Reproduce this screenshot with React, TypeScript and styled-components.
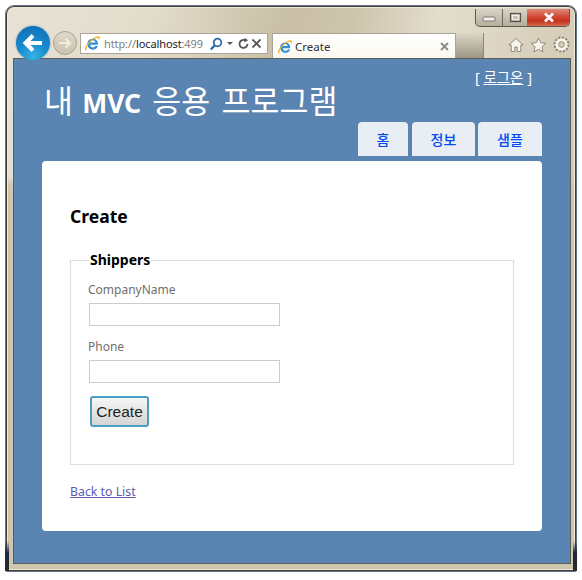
import React from "react";
import styled, { createGlobalStyle } from "styled-components";

const Global = createGlobalStyle`
  html, body { margin: 0; padding: 0; background: #fff; }
  * { box-sizing: border-box; }
  body { font-family: "Noto Sans", "Noto Sans CJK KR", sans-serif; }
`;

const Page = styled.div`
  width: 582px;
  height: 580px;
  padding: 5px 5px 8px 5px;
  overflow: hidden;
`;

const Frame = styled.div`
  position: relative;
  width: 572px;
  height: 567px;
  display: flex;
  flex-direction: column;
  padding: 0 6px 8px 8px;
  border: 1px solid #66768f;
  border-radius: 9px 9px 2px 2px;
  background:
    linear-gradient(180deg, rgba(255,255,255,0) 0 170px, #cfc6ae 180px 100%),
    linear-gradient(100deg, #e6e2d6 0%, #e2dccb 22%, #c9bfa6 42%, #cdc4ac 52%, #e3ddcd 65%, #d7cfba 82%, #cfc7b1 100%);
  box-shadow: inset 0 0 0 1px #3f3f38, inset 0 0 0 2px #efeadb;
`;

const EdgeShade = styled.div`
  position: absolute;
  left: -1px;
  bottom: 0;
  width: 4px;
  height: 30px;
  background: linear-gradient(180deg, rgba(20,30,60,0), #1c2640 40%, #2a2a2a);
`;

const RightShade = styled(EdgeShade)`
  left: auto;
  right: -1px;
`;

const TitleBar = styled.div`
  height: 27px;
  display: flex;
  justify-content: flex-end;
  align-items: flex-start;
`;

const Controls = styled.div`
  width: 95px;
  height: 18px;
  margin: 3px 0 0 0;
  display: grid;
  grid-template-columns: 26px 25px 44px;
  border: 1px solid #5c5a50;
  border-top: 0;
  border-radius: 0 0 5px 5px;
  overflow: hidden;
  background: linear-gradient(180deg, #d9d4c6, #b5ae9c);
`;

const Ctl = styled.div<{ $close?: boolean }>`
  display: flex;
  align-items: center;
  justify-content: center;
  border-left: ${(p) => (p.$close ? "0" : "1px solid #6b675b")};
  background: ${(p) => (p.$close ? "linear-gradient(180deg, #e0887a 0%, #d34a36 45%, #c4321f 70%, #d76a52 100%)" : "transparent")};
  &:first-child { border-left: 0; }
`;

const Toolbar = styled.div`
  height: 26px;
  display: flex;
  align-items: flex-start;
`;

const Back = styled.div`
  width: 34px;
  height: 34px;
  margin: -7px 0 0 2px;
  flex: none;
  position: relative;
  z-index: 2;
  border-radius: 50%;
  display: flex;
  align-items: center;
  justify-content: center;
  background: radial-gradient(circle at 50% 90%, #35b2e6 0%, #1688cb 45%, #0f6db5 100%);
  box-shadow: 0 0 2px #5f94b8;
`;

const Forward = styled.div`
  width: 24px;
  height: 24px;
  margin: -2px 0 0 3px;
  flex: none;
  border-radius: 50%;
  border: 1px solid #a8a291;
  display: flex;
  align-items: center;
  justify-content: center;
  background: linear-gradient(180deg, #ded8c9, #cbc3ae);
`;

const Address = styled.div`
  width: 188px;
  height: 21px;
  margin-left: 3px;
  flex: none;
  display: flex;
  align-items: center;
  padding: 0 2px 0 3px;
  background: #fff;
  border: 1px solid #a9a596;
  overflow: hidden;
`;

const UrlText = styled.div`
  width: 103px;
  margin-left: 3px;
  flex: none;
  white-space: nowrap;
  font-size: 11px;
  letter-spacing: -0.1px;
  color: #80807e;
  b { font-weight: 400; color: #222; }
`;

const AddrIcons = styled.div`
  display: flex;
  align-items: center;
  gap: 1px;
  margin-left: 2px;
`;

const Caret = styled.div`
  width: 0;
  height: 0;
  margin: 0 3px;
  border-left: 3px solid transparent;
  border-right: 3px solid transparent;
  border-top: 3px solid #555;
`;

const BrowserTab = styled.div`
  width: 184px;
  height: 26px;
  margin-left: 4px;
  flex: none;
  display: flex;
  align-items: center;
  padding: 0 6px 0 4px;
  background: linear-gradient(180deg, #fff, #faf8f0);
  border: 1px solid #a9a596;
  border-bottom: 0;
  font-size: 11.5px;
  color: #333;
`;

const TabTitle = styled.span`
  margin-left: 2px;
  flex: 1;
`;

const NewTab = styled.div`
  width: 28px;
  height: 25px;
  flex: none;
  background: linear-gradient(180deg, #dcd6c7, #9d9684);
  border-right: 1px solid #8c8675;
`;

const ToolIcons = styled.div`
  margin-left: auto;
  display: flex;
  align-items: center;
  gap: 6px;
  padding: 3px 0 0 0;
`;

const Viewport = styled.div`
  flex: 1;
  min-height: 0;
  background: #5a84b1;
  padding: 0 28px;
  box-shadow: 0 0 0 1px #5b5c52;
`;

const Login = styled.div`
  padding: 9px 10px 0 0;
  height: 24px;
  text-align: right;
  font-size: 14.5px;
  line-height: 19px;
  color: #fff;
  a { color: #fff; text-decoration: underline; }
`;

const SiteTitle = styled.h1`
  margin: 0 0 0 2px;
  height: 39px;
  font-size: 31.5px;
  line-height: 36px;
  font-weight: 400;
  word-spacing: 3px;
  color: #fff;
  white-space: nowrap;
  b { font-weight: 700; font-size: 26.5px; margin-left: -2px; font-family: "Noto Sans", sans-serif; }
`;

const Menu = styled.nav`
  display: flex;
  justify-content: flex-end;
  height: 34px;
`;

const MenuTab = styled.a<{ $w: number; $gap: number }>`
  width: ${(p) => p.$w}px;
  margin-left: ${(p) => p.$gap}px;
  display: flex;
  align-items: center;
  justify-content: center;
  padding-bottom: 1px;
  background: #e8eef4;
  border-radius: 4px 4px 0 0;
  font-size: 14px;
  font-weight: 500;
  color: #034af3;
`;

const Card = styled.main`
  height: 370px;
  margin-top: 5px;
  padding: 43px 28px 0;
  background: #fff;
  border-radius: 4px;
  display: flex;
  flex-direction: column;
`;

const Heading = styled.h2`
  margin: 0;
  height: 24px;
  font-size: 17.5px;
  line-height: 24px;
  font-weight: 700;
  color: #000;
`;

const Fieldset = styled.fieldset`
  margin: 24px 0 0;
  padding: 0 0 0 18px;
  height: 213px;
  border: 1px solid #ddd;
  min-inline-size: 0;
`;

const Legend = styled.legend`
  margin-left: 0;
  padding: 0 1px;
  font-size: 14px;
  line-height: 16px;
  font-weight: 700;
  color: #000;
`;

const Label = styled.label<{ $first?: boolean }>`
  display: block;
  height: 20px;
  margin: ${(p) => (p.$first ? "12px" : "11px")} 0 0 -1px;
  font-size: 12px;
  line-height: 20px;
  color: #6f6f6f;
`;

const TextInput = styled.input`
  display: block;
  width: 191px;
  height: 23px;
  margin-top: 3px;
  border: 1px solid #ccc;
  background: #fff;
  padding: 0 2px;
`;

const Submit = styled.button`
  display: block;
  width: 59px;
  height: 31px;
  margin: 13px 0 0 1px;
  padding: 0;
  border: 2px solid #4b9dc2;
  border-radius: 3px;
  background: linear-gradient(180deg, #f6f6f6, #d5d5d5);
  font-family: "Liberation Sans", sans-serif;
  font-size: 15.5px;
  color: #222;
`;

const BackLink = styled.a`
  display: block;
  margin-top: 18px;
  font-size: 12.3px;
  line-height: 18px;
  color: #5b5bb0;
  text-decoration: underline;
`;

const IeLogo = ({ size = 17 }: { size?: number }) => (
  <svg width={size} height={size} viewBox="0 0 18 18" style={{ flex: "none" }}>
    <path d="M3.6 9.2a5.6 5.6 0 0 1 11-1.2l.2 2.3H6.5c.2 1.8 1.4 2.9 3 2.9 1.2 0 2.1-.5 2.7-1.5h2.6c-.8 2.4-2.9 3.8-5.4 3.8-3.3 0-5.8-2.6-5.8-6.3zM6.6 8h5.5c-.2-1.5-1.2-2.4-2.7-2.4S6.8 6.500 6.600 8z" fill="#2f8fd8" />
    <path d="M1.300 15.800C.3 13.700 3.600 8 8.500 4.400c3.500-2.600 7-3.700 8-2.400.6.800.2 2-.6 3.400-.2-1.400-1.100-2.400-2-2.400-2.800 0-9.400 5.800-11 10.400-.3.900-.3 1.700.1 2.300-.9.600-1.500.700-1.700.1z" fill="#f2b01e" />
  </svg>
);

export default function App() {
  return (
    <Page>
      <Global />
      <Frame>
        <EdgeShade />
        <RightShade />
        <TitleBar>
          <Controls>
            <Ctl>
              <svg width="14" height="8" viewBox="0 0 14 8"><rect x="1" y="3" width="12" height="4" rx="1" fill="#f2f0ea" stroke="#55524a" strokeWidth="0.7" /></svg>
            </Ctl>
            <Ctl>
              <svg width="13" height="11" viewBox="0 0 13 11"><rect x="1.500" y="1.500" width="10" height="8" fill="none" stroke="#55524a" strokeWidth="1.200" /><rect x="3.500" y="3.500" width="6" height="4" fill="none" stroke="#f2f0ea" /></svg>
            </Ctl>
            <Ctl $close>
              <svg width="14" height="11" viewBox="0 0 14 11"><path d="M3 1.500l8 8M11 1.500l-8 8" stroke="#fff" strokeWidth="2.600" /></svg>
            </Ctl>
          </Controls>
        </TitleBar>
        <Toolbar>
          <Back>
            <svg width="22" height="20" viewBox="0 0 22 20"><path d="M20 10H4M11 2.500L3.500 10l7.500 7.500" fill="none" stroke="#fff" strokeWidth="4" /></svg>
          </Back>
          <Forward>
            <svg width="14" height="12" viewBox="0 0 14 12"><path d="M1 6h11M7.500 1.500L12 6l-4.500 4.500" fill="none" stroke="#f0ece0" strokeWidth="2" /></svg>
          </Forward>
          <Address>
            <IeLogo />
            <UrlText>http://<b>localhost</b>:499</UrlText>
            <AddrIcons>
              <svg width="14" height="14" viewBox="0 0 14 14"><circle cx="8.500" cy="5.500" r="3.800" fill="none" stroke="#2a6aa8" strokeWidth="1.800" /><path d="M5.800 8.200L1.800 12.500" stroke="#2a6aa8" strokeWidth="2.200" /></svg>
              <Caret />
              <svg width="13" height="13" viewBox="0 0 13 13"><path d="M10.500 7a4 4 0 1 1-2-3.500" fill="none" stroke="#555" strokeWidth="1.800" /><path d="M7.500 .8l3.500 2.400-3.500 2.200z" fill="#555" /></svg>
              <svg width="11" height="11" viewBox="0 0 11 11"><path d="M1.500 1.500l8 8M9.500 1.500l-8 8" stroke="#555" strokeWidth="1.800" /></svg>
            </AddrIcons>
          </Address>
          <BrowserTab>
            <IeLogo size={16} />
            <TabTitle>Create</TabTitle>
            <svg width="9" height="9" viewBox="0 0 9 9"><path d="M1 1l7 7M8 1L1 8" stroke="#8b8b8b" strokeWidth="1.800" /></svg>
          </BrowserTab>
          <NewTab />
          <ToolIcons>
            <svg width="16" height="16" viewBox="0 0 16 16"><path d="M8 1.500L1 8h2.200v6.500h3.600V10h2.400v4.500h3.600V8H15z" fill="#f6f4ec" stroke="#7b7565" strokeWidth="0.800" /></svg>
            <svg width="17" height="16" viewBox="0 0 17 16"><path d="M8.500 1l2.200 4.700 5.100.6-3.800 3.500 1 5.100-4.500-2.600-4.500 2.600 1-5.100L1.200 6.300l5.100-.6z" fill="#f6f4ec" stroke="#7b7565" strokeWidth="0.800" /></svg>
            <svg width="17" height="17" viewBox="0 0 17 17"><circle cx="8.500" cy="8.500" r="5" fill="none" stroke="#f6f4ec" strokeWidth="3.400" /><circle cx="8.500" cy="8.500" r="7" fill="none" stroke="#8b8574" strokeWidth="2" strokeDasharray="2.200 1.470" /><circle cx="8.500" cy="8.500" r="2.800" fill="none" stroke="#8b8574" strokeWidth="0.800" /></svg>
          </ToolIcons>
        </Toolbar>
        <Viewport>
          <Login>[ <a>로그온</a> ]</Login>
          <SiteTitle>내 <b>MVC</b> 응용 프로그램</SiteTitle>
          <Menu>
            <MenuTab $w={50} $gap={0}>홈</MenuTab>
            <MenuTab $w={63} $gap={4}>정보</MenuTab>
            <MenuTab $w={64} $gap={3}>샘플</MenuTab>
          </Menu>
          <Card>
            <Heading>Create</Heading>
            <Fieldset>
              <Legend>Shippers</Legend>
              <Label $first>CompanyName</Label>
              <TextInput />
              <Label>Phone</Label>
              <TextInput />
              <Submit>Create</Submit>
            </Fieldset>
            <BackLink>Back to List</BackLink>
          </Card>
        </Viewport>
      </Frame>
    </Page>
  );
}
